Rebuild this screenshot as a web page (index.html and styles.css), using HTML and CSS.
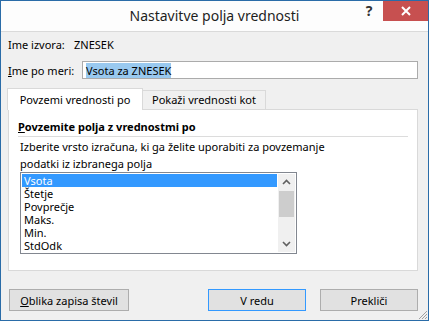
FILE: index.html
```html
<!DOCTYPE html>
<html lang="sl">
<head>
    <meta charset="UTF-8">
    <title>Nastavitve polja vrednosti</title>
    <link rel="stylesheet" href="styles.css">
</head>
<body>
    <div class="dialog">
        <div class="titlebar">
            <div></div>
            <div class="title">Nastavitve polja vrednosti</div>
            <div class="controls">
                <span class="help">?</span>
                <span class="close">
                    <svg width="10" height="10" viewBox="0 0 10 10"><path d="M1 1 L9 9 M9 1 L1 9" stroke="#fff" stroke-width="2"/></svg>
                </span>
            </div>
        </div>

        <div class="content">
            <div class="row source">
                <span class="lbl">Ime izvora:</span>
                <span>ZNESEK</span>
            </div>
            <div class="row custom">
                <label class="lbl-wide" for="ime"><u>I</u>me po meri:</label>
                <div class="input" id="ime"><span class="sel">Vsota za ZNESEK</span></div>
            </div>

            <div class="tabs">
                <div class="tab active">Povzemi vrednosti po</div>
                <div class="tab second">Pokaži vrednosti kot</div>
            </div>
            <div class="panel">
                <div class="heading"><u>P</u>ovzemite polja z vrednostmi po</div>
                <p class="desc">Izberite vrsto izračuna, ki ga želite uporabiti za povzemanje<br>podatki iz izbranega polja</p>
                <div class="listbox">
                    <ul class="items">
                        <li class="selected">Vsota</li>
                        <li>Štetje</li>
                        <li>Povprečje</li>
                        <li>Maks.</li>
                        <li>Min.</li>
                        <li>StdOdk</li>
                    </ul>
                    <div class="scrollbar">
                        <svg class="arrow" width="17" height="17" viewBox="0 0 17 17"><path d="M5 10 L8.5 6.5 L12 10" stroke="#606060" stroke-width="1.6" fill="none"/></svg>
                        <div class="track"><div class="thumb"></div></div>
                        <svg class="arrow" width="17" height="17" viewBox="0 0 17 17"><path d="M5 7 L8.5 10.5 L12 7" stroke="#606060" stroke-width="1.6" fill="none"/></svg>
                    </div>
                </div>
            </div>

            <div class="buttons">
                <button class="btn btn-format"><u>O</u>blika zapisa števil</button>
                <div class="spacer"></div>
                <button class="btn btn-ok">V redu</button>
                <button class="btn">Prekliči</button>
            </div>
            <div class="grip">
                <svg width="12" height="12" viewBox="0 0 12 12"><path d="M11 3 L3 11 M11 6 L6 11 M11 9 L9 11" stroke="#a0a0a0" stroke-width="1"/></svg>
            </div>
        </div>
    </div>
</body>
</html>
```

FILE: styles.css
```css
body {
    margin: 0;
    font-family: "Noto Sans", "Open Sans", sans-serif;
    font-size: 11px;
    color: #000;
}
.dialog {
    width: 429px;
    height: 321px;
    box-sizing: border-box;
    border: 1px solid #2a6ca8;
    background-color: #f0f0f0;
    display: flex;
    flex-direction: column;
}
.titlebar {
    height: 30px;
    background-color: #fdfdfd;
    border-bottom: 1px solid #dadada;
    display: grid;
    grid-template-columns: 1fr auto 1fr;
}
.title {
    font-size: 14px;
    line-height: 30px;
    color: #1e1e1e;
}
.controls {
    display: flex;
    justify-content: flex-end;
    align-items: flex-start;
}
.help {
    width: 26px;
    height: 20px;
    font-size: 14px;
    font-weight: bold;
    line-height: 20px;
    text-align: center;
    color: #333;
    margin-right: 1px;
}
.close {
    width: 45px;
    height: 20px;
    background-color: #c75050;
    display: flex;
    align-items: center;
    justify-content: center;
}
.content {
    flex: 1;
    padding: 4px 10px 0 7px;
    display: flex;
    flex-direction: column;
    position: relative;
}
.row {
    display: flex;
    align-items: center;
}
.source {
    height: 16px;
}
.lbl {
    width: 66px;
    flex: none;
}
.custom {
    margin-top: 9px;
    height: 18px;
}
.lbl-wide {
    width: 74px;
    flex: none;
}
.input {
    flex: 1;
    height: 18px;
    box-sizing: border-box;
    border: 1px solid #ababab;
    background-color: #fff;
    padding: 0 3px;
    display: flex;
    align-items: center;
}
.sel {
    background-color: #99c9ef;
    line-height: 15px;
}
.tabs {
    display: flex;
    align-items: flex-end;
    margin: 9px 0 0 -1px;
    height: 21px;
    position: relative;
    z-index: 1;
}
.tab {
    height: 19px;
    box-sizing: border-box;
    border: 1px solid #d9d9d9;
    border-bottom: none;
    background-color: #f0f0f0;
    text-align: center;
    line-height: 18px;
}
.tab.active {
    width: 136px;
    height: 22px;
    background-color: #fff;
    line-height: 22px;
    margin-bottom: -1px;
}
.tab.second {
    width: 123px;
    border-left: none;
}
.panel {
    height: 162px;
    box-sizing: border-box;
    border: 1px solid #d9d9d9;
    background-color: #fff;
    padding: 9px 9px 0 9px;
}
.heading {
    font-weight: bold;
    line-height: 16px;
    padding-bottom: 1px;
    border-bottom: 1px solid #dcdcdc;
}
.desc {
    margin: 1px 0 0 2px;
    line-height: 17px;
}
.listbox {
    margin: 0 0 0 2px;
    width: 277px;
    height: 82px;
    box-sizing: border-box;
    border: 1px solid #828790;
    display: flex;
    padding: 1px;
}
.items {
    flex: 1;
    list-style: none;
    margin: 0;
    padding: 0;
}
.items li {
    height: 13px;
    line-height: 13px;
    padding-left: 2px;
}
.items li.selected {
    background-color: #3399ff;
    color: #fff;
}
.scrollbar {
    width: 17px;
    background-color: #f0f0f0;
    display: flex;
    flex-direction: column;
    margin-left: 1px;
}
.arrow {
    display: block;
}
.track {
    flex: 1;
}
.thumb {
    height: 26px;
    background-color: #cdcdcd;
    margin: 0 1px;
}
.buttons {
    display: flex;
    margin-top: 18px;
    padding-left: 1px;
}
.spacer {
    flex: 1;
}
button {
    font-family: inherit;
    font-size: 11px;
    color: #000;
}
.btn {
    height: 22px;
    width: 98px;
    box-sizing: border-box;
    border: 1px solid #adadad;
    background-color: #e1e1e1;
    padding: 0;
    margin-left: 14px;
}
.btn-format {
    width: 120px;
    margin-left: 0;
}
.btn-ok {
    border-color: #3399ff;
    margin-left: 0;
}
.grip {
    position: absolute;
    right: 0;
    bottom: 0;
    height: 12px;
}
```
